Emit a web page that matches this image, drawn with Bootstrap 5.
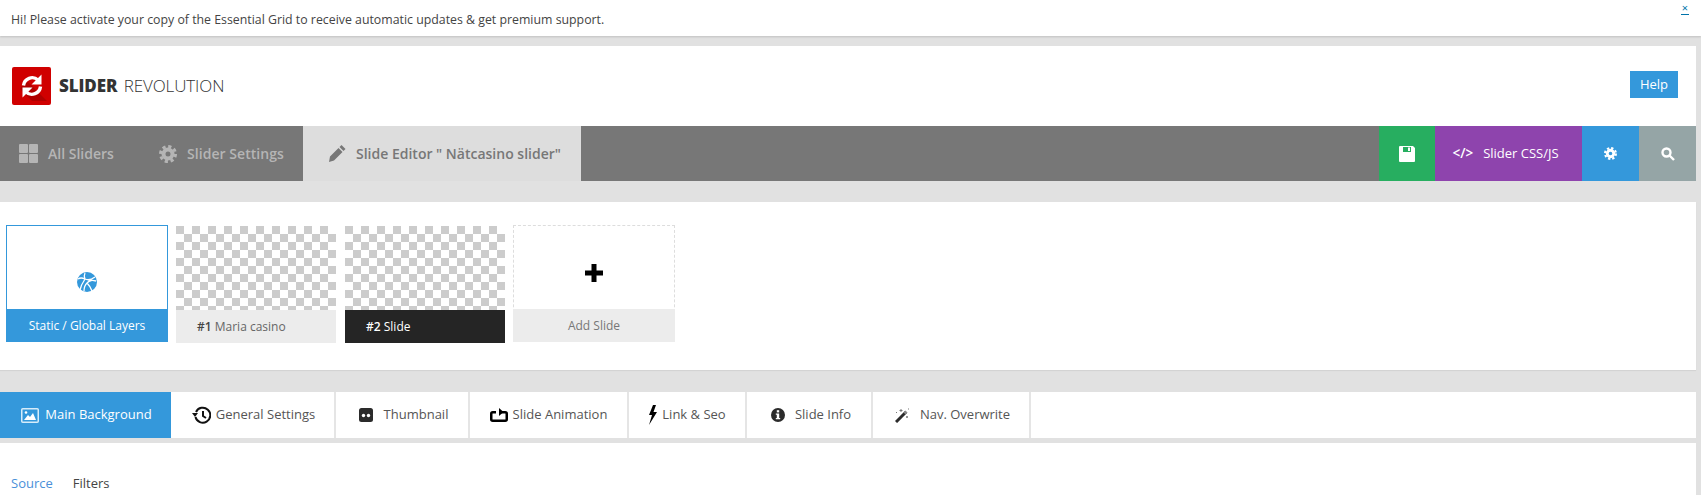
<!DOCTYPE html>
<html lang="en">
<head>
  <meta charset="UTF-8">
  <title>Slider Revolution</title>
  <link href="https://cdn.jsdelivr.net/npm/bootstrap@5.3.0/dist/css/bootstrap.min.css" rel="stylesheet">
  <style>
    html, body { height: 495px; overflow: hidden; }
    body { background: #e1e1e1; font-family: "Open Sans", sans-serif; font-size: 12px; color: #555; }
    svg { display: block; flex: none; }
    .notice-bar { height: 36px; background: #fff; box-shadow: 0 1px 2px rgba(0,0,0,.15); padding-left: 11px; color: #444; font-size: 12.34px; line-height: 39px; }
    .notice-close { color: #0073aa; font-size: 11px; line-height: 12px; margin: 2px 12px 0 0; height: 13px; text-decoration: none; border-bottom: 1px solid #0073aa; padding: 0 1px; }
    .page-wrap { padding-right: 5px; padding-top: 10px; }
    .head-bar { height: 80px; background: #fff; padding: 0 18px 0 12px; }
    .logo-box { width: 39px; height: 38px; background: #d00000; border-radius: 2px; margin-right: 8px; }
    .logo-text { font-size: 17px; color: #333; letter-spacing: -.1px; }
    .logo-text b { font-weight: 800; margin-right: 2px; }
    .logo-text span { font-weight: 300; }
    .help-btn { background: #3498db; color: #fff; font-size: 13px; width: 48px; height: 27px; line-height: 27px; text-align: center; margin-top: -4px; }
    .tool-bar { height: 55px; background: #777; font-size: 14px; font-weight: 600; }
    .tool-tab { color: #b5b5b5; height: 55px; gap: 10px; }
    .tab-all { width: 139px; padding-left: 19px; }
    .tab-settings { width: 164px; padding-left: 20px; }
    .tab-settings span { letter-spacing: .05px; }
    .tab-editor { width: 278px; background: #ddd; color: #777; padding-left: 26px; gap: 10px; }
    .tool-btn { height: 55px; color: #fff; font-size: 13px; font-weight: 400; }
    .btn-save { width: 56px; background: #27ae60; }
    .btn-css { width: 147px; background: #8e44ad; gap: 10px; padding-right: 6px; }
    .btn-css span { font-weight: 600; font-size: 13.5px; }
    .btn-gear { width: 57px; background: #3498db; }
    .btn-find { width: 57px; background: #95a5a6; }
    .slide-panel { height: 168px; margin-top: 21px; background: #fff; box-shadow: 0 1px 1px rgba(0,0,0,.06); padding: 23px 0 0 6px; gap: 8px; }
    .slide-thumb { width: 160px; height: 117px; margin-top: 1px; }
    .slide-second { margin-left: 1px; }
    .slide-static { width: 162px; margin-top: 0; border: 1px solid #3498db; }
    .slide-add { width: 162px; margin-top: 0; border: 1px dashed #ddd; border-bottom: 0; }
    .slide-img { height: 84px; background-color: #fff; background-image: conic-gradient(#ccc 25%, #fff 0 50%, #ccc 0 75%, #fff 0); background-size: 16px 16px; background-position: 8px 0; }
    .slide-blank { height: 83px; background: #fff; }
    .blank-globe { padding-bottom: 17px; }
    .blank-plus { padding-top: 10px; }
    .slide-name { height: 33px; line-height: 33px; font-size: 12px; padding-left: 21px; background: #ececec; color: #666; }
    .slide-name b { font-weight: 600; color: #444; }
    .name-static { background: #3498db; color: #fff; padding: 0; text-align: center; margin: 0 -1px -1px; height: 33px; font-weight: 400; }
    .name-dark { background: #252525; color: #fff; }
    .name-dark b { color: #fff; }
    .name-add { padding: 0; text-align: center; margin: 0 -1px; color: #777; }
    .tab-row { height: 46px; margin-top: 22px; background: #fff; font-size: 13px; }
    .set-tab { height: 46px; border-right: 2px solid #e5e5e5; color: #555; gap: 6px; justify-content: center; }
    .set-on { background: #3498db; color: #fff; border-right: 0; width: 171px; padding-left: 2px; }
    .set-general { width: 165px; gap: 5px; padding-left: 2px; }
    .set-thumb { width: 134px; gap: 11px; padding-left: 3px; }
    .set-anim { width: 159px; gap: 5px; }
    .set-link { width: 118px; gap: 5px; }
    .set-info { width: 126px; gap: 10px; padding-left: 4px; }
    .set-nav { width: 158px; gap: 10px; padding-left: 3px; }
    .source-box { height: 60px; margin-top: 5px; background: #fff; padding: 31px 0 0 11px; gap: 20px; font-size: 13px; color: #444; }
    .source-on { color: #4a90d9; }
  </style>
</head>
<body>
  <div class="notice-bar d-flex justify-content-between align-items-start">
    <span>Hi! Please activate your copy of the Essential Grid to receive automatic updates &amp; get premium support.</span>
    <a class="notice-close" href="#">×</a>
  </div>

  <div class="page-wrap">
    <div class="head-bar d-flex align-items-center">
      <div class="logo-box d-flex align-items-center justify-content-center">
        <svg width="30" height="30" viewBox="0 0 30 30">
          <path d="M9 9L30 30H15L3 18z" fill="#b00000"/>
          <path d="M6.500 14.500A8.700 8.700 0 0 1 21 9M23.500 15.500A8.700 8.700 0 0 1 9 21" fill="none" stroke="#fff" stroke-width="3.400"/>
          <path d="M24.500 3.500v10h-10zM5.500 26.500v-10h10z" fill="#fff"/>
        </svg>
      </div>
      <div class="logo-text"><b>SLIDER</b> <span>REVOLUTION</span></div>
      <div class="help-btn ms-auto">Help</div>
    </div>

    <div class="tool-bar d-flex">
      <div class="tool-tab tab-all d-flex align-items-center">
        <svg width="19" height="19" viewBox="0 0 19 19" fill="#b5b5b5"><rect width="9" height="9" rx="1"/><rect x="10" width="9" height="9" rx="1"/><rect y="10" width="9" height="9" rx="1"/><rect x="10" y="10" width="9" height="9" rx="1"/></svg>
        All Sliders
      </div>
      <div class="tool-tab tab-settings d-flex align-items-center">
        <svg width="18" height="18" viewBox="0 0 18 18" fill="none" stroke="#b5b5b5"><circle cx="9" cy="9" r="4.500" stroke-width="4"/><circle cx="9" cy="9" r="7.500" stroke-width="3" stroke-dasharray="3.200 2.690"/></svg>
        <span>Slider Settings</span>
      </div>
      <div class="tool-tab tab-editor d-flex align-items-center">
        <svg width="17" height="18" viewBox="0 0 17 18" fill="#777"><path d="M12.500 0l4 4-2 2-4-4zM9.500 3l4 4-8.500 8.500-5 1.500 1-5.500z"/></svg>
        Slide Editor " Nätcasino slider"
      </div>
      <div class="tool-btn btn-save ms-auto d-flex align-items-center justify-content-center">
        <svg width="16" height="16" viewBox="0 0 16 16"><path d="M1 0h13l2 2v13a1 1 0 0 1-1 1H1a1 1 0 0 1-1-1V1a1 1 0 0 1 1-1z" fill="#fff"/><rect x="4" y="1" width="8" height="5" fill="#27ae60"/><rect x="9" y="1.500" width="2" height="3.500" fill="#fff"/></svg>
      </div>
      <div class="tool-btn btn-css d-flex align-items-center justify-content-center">
        <span>&lt;/&gt;</span> Slider CSS/JS
      </div>
      <div class="tool-btn btn-gear d-flex align-items-center justify-content-center">
        <svg width="13" height="13" viewBox="0 0 18 18" fill="none" stroke="#fff"><circle cx="9" cy="9" r="4.500" stroke-width="4"/><circle cx="9" cy="9" r="7.500" stroke-width="3" stroke-dasharray="3.200 2.690"/></svg>
      </div>
      <div class="tool-btn btn-find d-flex align-items-center justify-content-center">
        <svg width="14" height="14" viewBox="0 0 14 14" fill="none" stroke="#fff" stroke-width="2.400"><circle cx="5.500" cy="5.500" r="4"/><path d="M8.500 8.500l4.500 4.500"/></svg>
      </div>
    </div>

    <div class="slide-panel d-flex align-items-start">
      <div class="slide-thumb slide-static">
        <div class="slide-blank blank-globe d-flex align-items-end justify-content-center">
          <svg width="20" height="20" viewBox="0 0 20 20"><circle cx="10" cy="10" r="10" fill="#3498db"/><path d="M1 7c3-2 5-1 7 0s6 1 10-2M8 7c-2 3-4 6-5 11M8 1c-1 2-1 4 0 6M10 11c3-3 5-3 9-2M10 11c-2 2-3 5-3 8M10 11c2 2 4 5 5 8" fill="none" stroke="#fff" stroke-width="1.300"/></svg>
        </div>
        <div class="slide-name name-static">Static / Global Layers</div>
      </div>
      <div class="slide-thumb">
        <div class="slide-img"></div>
        <div class="slide-name"><b>#1</b> Maria casino</div>
      </div>
      <div class="slide-thumb slide-second">
        <div class="slide-img"></div>
        <div class="slide-name name-dark"><b>#2</b> Slide</div>
      </div>
      <div class="slide-thumb slide-add">
        <div class="slide-blank blank-plus d-flex align-items-center justify-content-center">
          <svg width="20" height="20" viewBox="0 0 20 20"><path d="M10 1v18M1 10h18" stroke="#000" stroke-width="5"/></svg>
        </div>
        <div class="slide-name name-add">Add Slide</div>
      </div>
    </div>

    <div class="tab-row d-flex">
      <div class="set-tab set-on d-flex align-items-center">
        <svg width="18" height="15" viewBox="0 0 18 15"><rect x=".75" y=".75" width="16.500" height="13.500" rx="1" fill="none" stroke="#d6ecfa" stroke-width="1.500"/><path d="M3 12l4-5 2 2 3-4 3 7z" fill="#fff"/><circle cx="5" cy="4.500" r="1.300" fill="#fff"/></svg>
        Main Background
      </div>
      <div class="set-tab set-general d-flex align-items-center">
        <svg width="19" height="18" viewBox="0 0 19 18" fill="none" stroke="#111" stroke-width="2"><path d="M4 6a7.500 7.500 0 1 1-.5 5M11 5v5l3 2"/><path d="M0 7h6L3 11z" fill="#111" stroke="none"/></svg>
        General Settings
      </div>
      <div class="set-tab set-thumb d-flex align-items-center">
        <svg width="14" height="14" viewBox="0 0 14 14"><rect width="14" height="14" rx="2.500" fill="#2b2b2b"/><circle cx="4.500" cy="7.500" r="1.700" fill="#fff"/><circle cx="9.500" cy="7.500" r="1.700" fill="#fff"/></svg>
        Thumbnail
      </div>
      <div class="set-tab set-anim d-flex align-items-center">
        <svg width="18" height="14" viewBox="0 0 18 14"><rect x="1.250" y="4.250" width="15.500" height="8.500" rx="1.500" fill="none" stroke="#000" stroke-width="2.500"/><rect x="6" y="2" width="4" height="4" fill="#fff"/><path d="M9 0l4.500 4L9 8z" fill="#000"/></svg>
        Slide Animation
      </div>
      <div class="set-tab set-link d-flex align-items-center">
        <svg width="9" height="20" viewBox="0 0 9 20" fill="#000"><path d="M5 0L1 10h3L1 20 9 7H5.500L8 0z"/></svg>
        Link &amp; Seo
      </div>
      <div class="set-tab set-info d-flex align-items-center">
        <svg width="14" height="14" viewBox="0 0 14 14"><circle cx="7" cy="7" r="7" fill="#2b2b2b"/><rect x="5.800" y="2.200" width="2.400" height="2.200" fill="#fff"/><path d="M4.800 5.500h3.400v4.500h1v1.300H4.800V10h1V6.800h-1z" fill="#fff"/></svg>
        Slide Info
      </div>
      <div class="set-tab set-nav d-flex align-items-center">
        <svg width="15" height="15" viewBox="0 0 15 15"><path d="M1 14L11 4" stroke="#2b2b2b" stroke-width="3"/><path d="M9.500 5.500L11.500 3.500" stroke="#888" stroke-width="3"/><path d="M6 1v3M4.500 2.500h3M12 8v2M11 9h2M1.500 4v1M13.500 0.500v1" stroke="#777" stroke-width="1"/></svg>
        Nav. Overwrite
      </div>
    </div>

    <div class="source-box d-flex">
      <span class="source-on">Source</span>
      <span>Filters</span>
    </div>
  </div>
</body>
</html>
